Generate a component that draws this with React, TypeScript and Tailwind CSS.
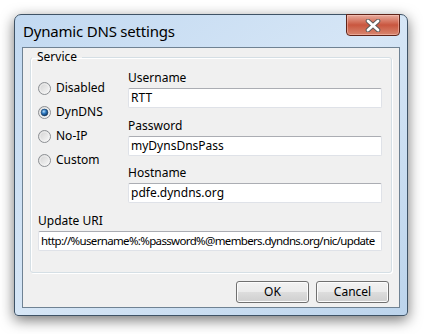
import { useState } from 'react';

function Radio({ checked }: { checked: boolean }) {
  return (
    <svg width="13" height="13" viewBox="0 0 13 13" className="shrink-0">
      <defs>
        <linearGradient id="rface" x1="0" y1="0" x2="1" y2="1">
          <stop offset="0" stopColor="#cfcfcf" />
          <stop offset="1" stopColor="#fbfbfb" />
        </linearGradient>
        <radialGradient id="rdot" cx="0.4" cy="0.35" r="0.7">
          <stop offset="0" stopColor="#b6def8" />
          <stop offset="0.45" stopColor="#2c78c2" />
          <stop offset="1" stopColor="#0b2c52" />
        </radialGradient>
      </defs>
      <circle cx="6.5" cy="6.5" r="6" fill="url(#rface)" stroke="#8c8f93" strokeWidth="1" />
      <circle cx="6.5" cy="6.5" r="4.6" fill="none" stroke="#f6f6f6" strokeWidth="0.8" opacity="0.8" />
      {checked && <circle cx="6.5" cy="6.5" r="3.4" fill="url(#rdot)" stroke="#1b3f66" strokeWidth="0.6" />}
    </svg>
  );
}

function Field({
  label,
  value,
  className,
  valueClassName,
}: {
  label: string;
  value: string;
  className?: string;
  valueClassName?: string;
}) {
  return (
    <div className={className}>
      <div className="h-[16px] leading-[16px] text-[#000]">{label}</div>
      <div className="mt-[2px] h-[20px] bg-white border border-[#dfe2e8] border-t-[#abadb3] rounded-[2px] px-[2px] leading-[18px] text-[#000] whitespace-nowrap overflow-hidden">
        <span className={valueClassName}>{value}</span>
      </div>
    </div>
  );
}

export default function App() {
  const [service, setService] = useState('DynDNS');
  const services = ['Disabled', 'DynDNS', 'No-IP', 'Custom'];

  return (
    <div className="w-[430px] h-[334px] bg-white overflow-hidden font-['Noto_Sans',sans-serif] text-[12px]">
      {/* Window */}
      <div className="ml-[14px] mt-[14px] w-[394px] h-[302px] rounded-t-[7px] rounded-b-[4px] border border-[#3f5366] bg-gradient-to-br from-[#c2d9f1] via-[#d6e6f6] to-[#bcd4ec] shadow-[0_4px_14px_rgba(0,0,0,0.55)] flex flex-col">
        {/* Title bar */}
        <div className="h-[32px] flex justify-between pl-[8px] pr-[7px] shrink-0">
          <div className="self-center text-[15px] leading-[20px] text-[#000] tracking-[-0.2px]">Dynamic DNS settings</div>
          <div className="-mt-[1px] w-[54px] h-[22px] rounded-b-[4px] border border-[#5e2318] bg-gradient-to-b from-[#e7aa9c] via-[#c9563f] to-[#d8866f] flex items-center justify-center shadow-[inset_0_0_0_1px_rgba(255,210,200,0.45)]">
            <svg width="16" height="13" viewBox="0 0 16 13">
              <path d="M3 2 L13 11 M13 2 L3 11" stroke="#5a5a5a" strokeWidth="4.6" strokeLinecap="round" />
              <path d="M3 2 L13 11 M13 2 L3 11" stroke="#ffffff" strokeWidth="2.8" strokeLinecap="round" />
            </svg>
          </div>
        </div>

        {/* Client area */}
        <div className="mx-[7px] h-[261px] border border-[#6f8293] bg-[#f0f0f0] flex flex-col">
          <fieldset className="ml-[7px] mt-[1px] w-[362px] h-[224px] border border-[#d5dfe5] rounded-[3px] shadow-[inset_1px_1px_0_#ffffff,1px_1px_0_#ffffff]">
            <legend className="ml-[1px] px-[5px] h-[16px] leading-[16px] text-[#000]">Service</legend>
            <div className="pl-[7px]">
              <div className="flex">
                <div className="w-[90px] pt-[11px] flex flex-col">
                  {services.map((s) => (
                    <label key={s} className="h-[24px] flex items-center gap-[5px] cursor-default" onClick={() => setService(s)}>
                      <Radio checked={service === s} />
                      <span className="text-[#000] leading-[16px]">{s}</span>
                    </label>
                  ))}
                </div>
                <div className="w-[254px] pt-[5px] flex flex-col">
                  <Field label="Username" value="RTT" />
                  <Field label="Password" value="myDynsDnsPass" className="mt-[10px]" />
                  <Field label="Hostname" value="pdfe.dyndns.org" className="mt-[9px]" />
                </div>
              </div>
              <Field
                label="Update URI"
                value="http://%username%:%password%@members.dyndns.org/nic/update"
                className="mt-[10px] w-[344px]"
                valueClassName="text-[11.5px] tracking-[-0.65px]"
              />
            </div>
          </fieldset>

          <div className="mt-[8px] mr-[10px] flex justify-end gap-[7px]">
            {['OK', 'Cancel'].map((b) => (
              <button
                key={b}
                className="w-[73px] h-[22px] rounded-[3px] border border-[#707070] bg-[linear-gradient(to_bottom,#f2f2f2_0%,#ebebeb_50%,#dddddd_50%,#cfcfcf_100%)] shadow-[inset_0_0_0_1px_#fcfcfc] text-[#000] leading-[18px]"
              >
                {b}
              </button>
            ))}
          </div>
        </div>
      </div>
    </div>
  );
}
